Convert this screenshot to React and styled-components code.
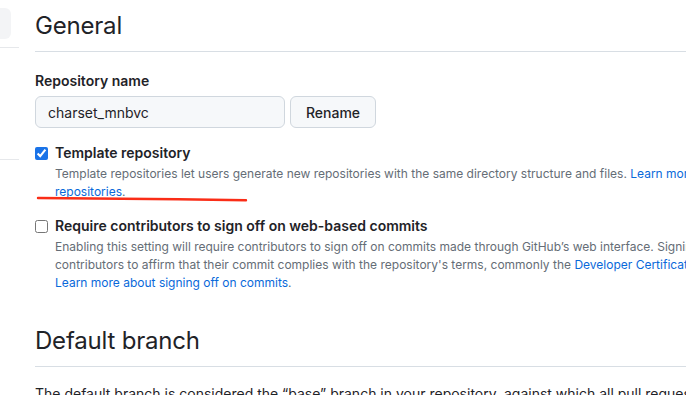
import React from "react";
import styled, { createGlobalStyle } from "styled-components";

const Global = createGlobalStyle`
  html, body {
    margin: 0;
    padding: 0;
    background: #ffffff;
    overflow: hidden;
  }
  body {
    font-family: Inter, "Liberation Sans", Arial, sans-serif;
    color: #1f2328;
  }
`;

function App() {
  return (
    <>
      <Global />
      <Page>
        <Sidebar>
          <NavItem />
          <NavDivider />
          <NavSpacer />
          <NavDivider />
        </Sidebar>

        <Main>
          <Subhead>General</Subhead>

          <FieldLabel>Repository name</FieldLabel>
          <FieldRow>
            <TextInput defaultValue="charset_mnbvc" />
            <Button>Rename</Button>
          </FieldRow>

          <CheckGroup top="15px">
            <Check type="checkbox" defaultChecked />
            <CheckBody>
              <CheckTitle>Template repository</CheckTitle>
              <Note>
                Template repositories let users generate new repositories with the same directory
                structure and files. <Link>Learn more about template</Link>
                <br />
                <Link>repositories</Link>.
              </Note>
              <Scribble viewBox="0 0 212 6" width="212" height="6">
                <path
                  d="M2 2 C 60 2.4, 140 3, 210 4.2"
                  fill="none"
                  stroke="#fa2d17"
                  strokeWidth="2.4"
                  strokeLinecap="round"
                />
              </Scribble>
            </CheckBody>
          </CheckGroup>

          <CheckGroup top="15px">
            <Check type="checkbox" />
            <CheckBody>
              <CheckTitle>Require contributors to sign off on web-based commits</CheckTitle>
              <Note>
                Enabling this setting will require contributors to sign off on commits made through
                GitHub’s web interface. Signing off is a way for
                <br />
                contributors to affirm that their commit complies with the repository's terms,
                commonly the <Link>Developer Certificate of Origin</Link>.
                <br />
                <Link>Learn more about signing off on commits</Link>.
              </Note>
            </CheckBody>
          </CheckGroup>

          <Subhead spaced>Default branch</Subhead>
          <Paragraph>
            The default branch is considered the “base” branch in your repository, against which
            all pull requests and code commits are automatically made, unless you specify a
            different branch.
          </Paragraph>
        </Main>
      </Page>
    </>
  );
}

export default App;

const Page = styled.div`
  display: flex;
  gap: 16px;
  width: 1100px;
`;

const Sidebar = styled.div`
  width: 19px;
  flex-shrink: 0;
  display: flex;
  flex-direction: column;
  padding-top: 8px;
`;

const NavItem = styled.div`
  width: 11px;
  height: 31px;
  background: #f3f4f6;
  border-radius: 0 6px 6px 0;
`;

const NavDivider = styled.div`
  height: 1px;
  background: #e6e8eb;
  margin-top: 8px;
`;

const NavSpacer = styled.div`
  height: 103px;
`;

const Main = styled.div`
  flex: 1;
  min-width: 0;
`;

const Subhead = styled.h2`
  margin: ${(p) => (p.spaced ? "34px" : "11px")} 0 0;
  padding-bottom: 10px;
  border-bottom: 1px solid #d8dee4;
  font-size: 24px;
  font-weight: 400;
  line-height: 30px;
  letter-spacing: -0.2px;
  color: #1f2328;
`;

const FieldLabel = styled.div`
  margin-top: 19px;
  font-size: 14px;
  font-weight: 600;
  line-height: 20px;
`;

const FieldRow = styled.div`
  display: flex;
  gap: 5px;
  margin-top: 5px;
`;

const TextInput = styled.input`
  box-sizing: border-box;
  width: 250px;
  height: 32px;
  padding: 0 12px;
  border: 1px solid #d0d7de;
  border-radius: 6px;
  background: #f6f8fa;
  font-family: inherit;
  font-size: 14px;
  color: #1f2328;
  outline: none;
`;

const Button = styled.button`
  box-sizing: border-box;
  width: 86px;
  height: 32px;
  border: 1px solid #d0d7de;
  border-radius: 6px;
  background: #f6f8fa;
  font-family: inherit;
  font-size: 14px;
  font-weight: 500;
  color: #1f2328;
`;

const CheckGroup = styled.div`
  position: relative;
  display: flex;
  gap: 7px;
  margin-top: ${(p) => p.top};
`;

const Check = styled.input`
  width: 13px;
  height: 13px;
  margin: 4px 0 0 0;
  accent-color: #1a73e8;
  flex-shrink: 0;
`;

const CheckBody = styled.div`
  position: relative;
  display: flex;
  flex-direction: column;
`;

const CheckTitle = styled.div`
  font-size: 14px;
  font-weight: 600;
  line-height: 20px;
  white-space: nowrap;
`;

const Note = styled.p`
  margin: 2px 0 0;
  font-size: 12px;
  line-height: 18px;
  color: #656d76;
  white-space: nowrap;
`;

const Link = styled.a`
  color: #0969da;
  text-decoration: none;
`;

const Scribble = styled.svg`
  position: absolute;
  left: -19px;
  top: 53px;
`;

const Paragraph = styled.p`
  margin: 16px 0 0;
  font-size: 14px;
  line-height: 21px;
  color: #1f2328;
  white-space: nowrap;
`;
